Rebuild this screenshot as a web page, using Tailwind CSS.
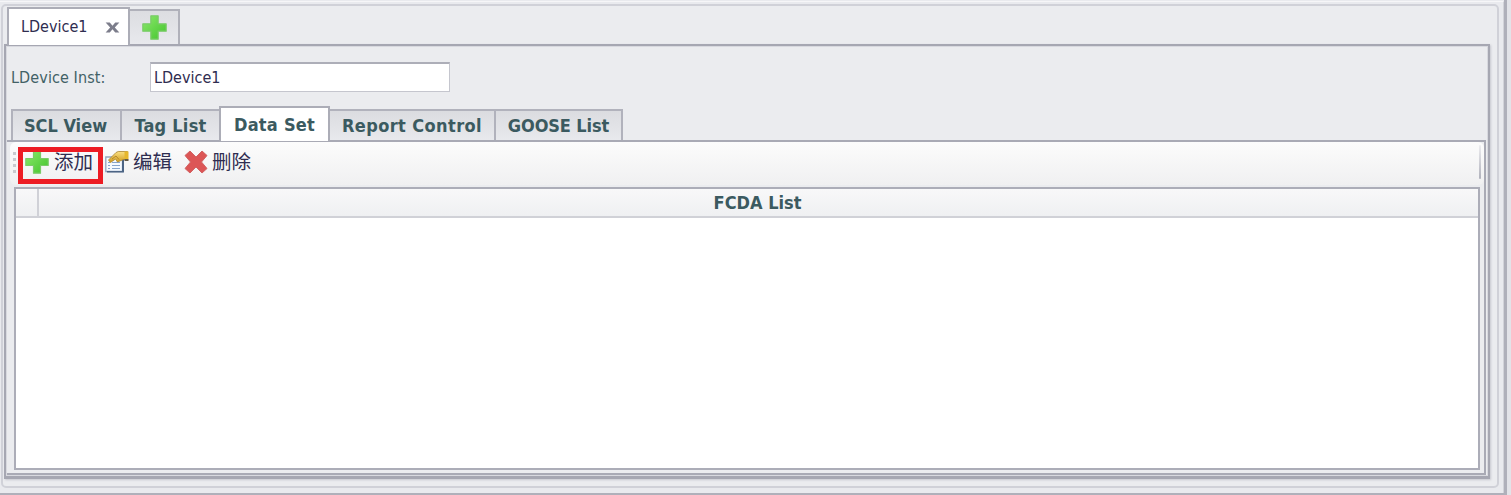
<!DOCTYPE html>
<html lang="zh">
<head>
<meta charset="utf-8">
<title>LDevice1</title>
<script src="https://cdn.jsdelivr.net/npm/@tailwindcss/browser@4"></script>
</head>
<body class="h-[495px] w-[1511px] overflow-hidden bg-[#e2e3e8] font-['DejaVu_Sans_Condensed','DejaVu_Sans','Noto_Sans_CJK_SC',sans-serif] [font-stretch:condensed]">
<svg class="absolute h-0 w-0">
  <defs>
    <linearGradient id="green" x1="0" y1="0" x2="1" y2="1"><stop offset="0" stop-color="#8ce86c"/><stop offset="1" stop-color="#42c42c"/></linearGradient>
    <linearGradient id="gold" x1="0" y1="0" x2="0" y2="1"><stop offset="0" stop-color="#fbe184"/><stop offset="1" stop-color="#d09a1c"/></linearGradient>
    <symbol id="plus" viewBox="0 0 24 24"><path d="M8.500 .8h7v7.700h7.700v7h-7.700v7.700h-7v-7.700H.8v-7h7.700z" fill="url(#green)" stroke="#7acb68" stroke-width="1.200" stroke-linejoin="round"/></symbol>
  </defs>
</svg>
<div class="h-[495px] w-[1507px] border-r-[3px] border-b-2 border-[#afb0ba] bg-[#e9eaee] pt-px">
 <div class="h-[492px] border-t border-r border-t-[#f6f6f8] border-r-[#d2d3d9] pt-[2px]">
  <div class="ml-px h-[484px] w-[1498px] rounded-[5px] border-2 border-[#d0d1d8] bg-[#ebecef] pt-px">
    <!-- device tabs -->
    <div class="ml-[4px] flex h-[37px] items-end">
      <div class="relative z-10 -mb-px flex h-[38px] w-[123px] items-center border-2 border-b-0 border-[#acadb7] bg-white pl-[12px] text-[16px] text-[#2f2d50]">
        <span class="w-[84px]">LDevice1</span>
        <svg class="h-[11px] w-[15px]" viewBox="0 0 15 12"><path d="M0 .5h4.500l3 3.700 3-3.700H15L10 6l5 5.500h-4.500l-3-3.700-3 3.700H0L5 6z" fill="#7c7d8b"/></svg>
      </div>
      <div class="flex h-[35px] w-[50px] items-center justify-center border-t-2 border-r-2 border-[#b0b1ba] bg-gradient-to-b from-[#dcdde1] to-[#e8e9ed]">
        <svg class="h-[25px] w-[25px]"><use href="#plus"/></svg>
      </div>
    </div>
    <!-- device page -->
    <div class="ml-px h-[435px] w-[1486px] border-2 border-b-[3px] border-[#a6a7b2] bg-[#ebecef] shadow-[1px_1px_2px_#c6c7cf]">
     <div class="h-[430px] border border-[#d8d9df]">
      <div class="flex h-[61px] items-center pl-[4px] text-[16px]">
        <span class="w-[139px] text-[#426166]"><span class="tracking-[0.1px]">LDevice Inst:</span></span>
        <div class="-mt-px flex h-[30px] w-[300px] items-center border border-t-2 border-[#c5c6ce] border-t-[#adaeb8] bg-white pl-[3px] text-[#2f2d50]">LDevice1</div>
      </div>
      <!-- section tabs -->
      <div class="flex h-[32px] items-end pl-[4px] text-[18px] font-bold text-[#3b5a60]">
        <div class="flex h-[31px] w-[111px] items-center justify-center border-2 border-b-0 border-[#b1b2bc] bg-gradient-to-b from-[#dbdce0] to-[#e8e9ed] pr-[2px] whitespace-nowrap"><span>SCL View</span></div>
        <div class="flex h-[31px] w-[97px] items-center justify-center border-t-2 border-[#b1b2bc] bg-gradient-to-b from-[#dbdce0] to-[#e8e9ed] whitespace-nowrap"><span class="tracking-[0.25px]">Tag List</span></div>
        <div class="relative z-10 -mb-px flex h-[35px] w-[111px] items-center justify-center border-2 border-b-0 border-[#acadb7] bg-white whitespace-nowrap"><span class="tracking-[0.25px]">Data Set</span></div>
        <div class="flex h-[31px] w-[166px] items-center justify-center border-t-2 border-r-2 border-[#b1b2bc] bg-gradient-to-b from-[#dbdce0] to-[#e8e9ed] whitespace-nowrap"><span class="tracking-[0.4px]">Report Control</span></div>
        <div class="flex h-[31px] w-[127px] items-center justify-center border-t-2 border-r-2 border-[#b1b2bc] bg-gradient-to-b from-[#dbdce0] to-[#e8e9ed] whitespace-nowrap"><span class="tracking-[-0.1px]">GOOSE List</span></div>
      </div>
      <!-- section page -->
      <div class="h-[335px] w-[1479px] border-t-2 border-r-2 border-b-2 border-[#a9aab5] pb-[2px] pl-[3px]">
        <div class="relative flex h-[43px] items-center rounded-md bg-gradient-to-b from-[#fcfcfc] to-[#f0f0f1] pb-[3px] text-[19.500px] text-[#2f2d50]">
          <div class="ml-[3px] flex w-[3px] flex-col gap-[3px]"><i class="h-[3px] bg-[#c9c9ce]"></i><i class="h-[3px] bg-[#c9c9ce]"></i><i class="h-[3px] bg-[#c9c9ce]"></i><i class="h-[3px] bg-[#c9c9ce]"></i></div>
          <svg class="ml-[9px] h-[24px] w-[24px]"><use href="#plus"/></svg>
          <span class="mt-px ml-[5px] w-[51px]">添加</span>
          <svg class="h-[24px] w-[24px]" viewBox="0 0 24 24">
            <path d="M.8 7h16.700v14.500H.8z" fill="#f5faff" stroke="#93a5bf" stroke-width="1.300"/>
            <path d="M17 8h2v14.500H2V21h15z" fill="#4c6484"/>
            <path d="M3 12.500h2m2 0h8M3 15.500h2m2 0h8M3 18.500h2m2 0h8" stroke="#87a5ce" stroke-width="1.200"/>
            <path d="M3.500 10l7.500-7.500q2-1.500 5-1h6.500v8h-4l-6 2.500-2-3-5 3.500z" fill="url(#gold)" stroke="#a98430" stroke-width=".8"/>
            <path d="M7 9l4-3 3 3.500" fill="none" stroke="#a77a21" stroke-width=".8"/>
            <path d="M19.500 1.500h4v8h-4z" fill="#e6b72d"/><path d="M19.500 9h4v2h-4z" fill="#625947"/>
          </svg>
          <span class="mt-px ml-[4px] w-[51px]">编辑</span>
          <svg class="h-[24px] w-[24px]" viewBox="0 0 24 24"><path d="M6 1l6 6L18 1l5 4.500-5.500 6.500 5.500 6.500-5 4.500-6-6L6 23l-5-4.500L6.500 12 1 5.500z" fill="#dc5656" stroke="#d26363" stroke-linejoin="round"/></svg>
          <span class="mt-px ml-[4px]">删除</span>
          <div class="absolute top-[3px] right-[3px] h-[34px] w-[2px] rounded bg-gradient-to-b from-[#ededf0] to-[#b0b1bb]"></div>
          <div class="absolute top-[5px] left-[8px] h-[37px] w-[85px] border-[5px] border-[#ed1c24]"></div>
        </div>
        <!-- data set table -->
        <div class="mt-[2px] ml-[4px] h-[283px] w-[1466px] border-2 border-[#acadb8] bg-white">
          <div class="flex h-[29px] border-b-2 border-[#d0d1d7] bg-gradient-to-b from-[#f8f8f9] to-[#eff0f2] text-[18px] font-bold text-[#3b5a60]">
            <div class="w-[23px] border-r-2 border-[#d0d1d7]"></div>
            <div class="flex flex-1 items-center justify-center pr-[2px]"><span class="-mt-px">FCDA List</span></div>
          </div>
        </div>
      </div>
     </div>
    </div>
  </div>
 </div>
</div>
</body>
</html>
